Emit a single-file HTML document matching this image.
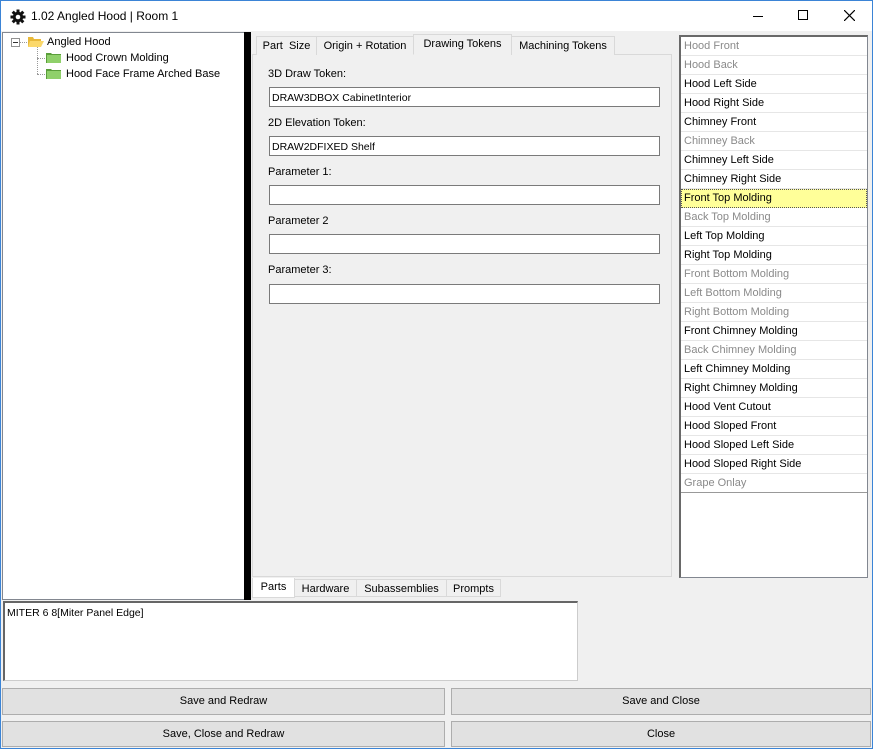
<!DOCTYPE html>
<html><head><style>
body{margin:0;width:873px;height:749px;background:#f0f0f0;font-family:"Liberation Sans",sans-serif;font-size:11px;color:#000;position:relative;overflow:hidden}
.a{position:absolute;box-sizing:border-box}
.win{left:0;top:0;width:873px;height:749px;border:1px solid #3b84d6}
.title{left:1px;top:1px;width:871px;height:30px;background:#fff}
.tree{left:2px;top:32px;width:244px;height:568px;background:#fff;border:1px solid #828790;border-right:none}
.split{left:244px;top:32px;width:7px;height:568px;background:#000}
.tabs{left:252px;top:54px;width:420px;height:523px;border:1px solid #d9d9d9;background:#f0f0f0}
.tab{top:36px;height:19px;border:1px solid #d9d9d9;border-bottom:none;background:#f0f0f0;padding-top:3px;text-align:center;white-space:nowrap}
.inp{left:269px;width:391px;height:20px;background:#fff;border:1px solid #7a7a7a;padding:4px 2px 0;font-size:10.5px}
.lbl{left:268px}
.list{left:679px;top:35px;width:189px;height:543px;background:#fff;border:1px solid #828790;border-top:2px solid #696969;border-left:2px solid #696969}
.row{left:0;width:186px;height:19px;border-bottom:1px solid #e6e6e6;padding:3px 0 0 3px}
.g{color:#8a8a8a}
.btn{height:27px;background:#e1e1e1;border:1px solid #adadad;text-align:center;line-height:25px}
</style></head><body>
<div class="a win"></div>
<div class="a title">
<svg class="a" style="left:9px;top:8px" width="16" height="16" viewBox="0 0 16 16"><g fill="#111"><circle cx="8" cy="8" r="5.2"/><rect x="6.5" y="0.5" width="3" height="15"/><rect x="0.5" y="6.5" width="15" height="3"/><rect x="6.5" y="0.5" width="3" height="15" transform="rotate(45 8 8)"/><rect x="6.5" y="0.5" width="3" height="15" transform="rotate(-45 8 8)"/></g><circle cx="8" cy="8" r="2.3" fill="#fff"/></svg>
<div class="a" style="left:30px;top:8px;font-size:12px">1.02 Angled Hood | Room 1</div>
<div class="a" style="left:752px;top:15px;width:10px;height:1px;background:#000"></div>
<div class="a" style="left:797px;top:9px;width:10px;height:10px;border:1px solid #000"></div>
<svg class="a" style="left:843px;top:9px" width="11" height="11"><path d="M0 0L11 11M11 0L0 11" stroke="#000" stroke-width="1.2"/></svg>
</div>
<div class="a tree">
<div class="a" style="left:8px;top:5px;width:9px;height:9px;border:1px solid #919191;background:#fff"></div>
<div class="a" style="left:10px;top:9px;width:5px;height:1px;background:#333"></div>
<div class="a" style="left:17px;top:9px;width:9px;border-top:1px dotted #999"></div>
<div class="a" style="left:34px;top:14px;height:27px;border-left:1px dotted #999"></div>
<div class="a" style="left:34px;top:25px;width:8px;border-top:1px dotted #999"></div>
<div class="a" style="left:34px;top:41px;width:8px;border-top:1px dotted #999"></div>
<svg class="a" style="left:25px;top:3px" width="16" height="12"><path d="M0 1h5l1 2h7v8H0z" fill="#e8b93a"/><path d="M2 5h14l-3 6H0z" fill="#fbd86b"/></svg>
<svg class="a" style="left:43px;top:19px" width="16" height="12"><path d="M0 1h5l1 1h9v9H0z" fill="#5a9e3a"/><rect x="1" y="3" width="14" height="8" fill="#8fd06a"/></svg>
<svg class="a" style="left:43px;top:35px" width="16" height="12"><path d="M0 1h5l1 1h9v9H0z" fill="#5a9e3a"/><rect x="1" y="3" width="14" height="8" fill="#8fd06a"/></svg>
<div class="a" style="left:44px;top:3px">Angled Hood</div>
<div class="a" style="left:63px;top:19px">Hood Crown Molding</div>
<div class="a" style="left:63px;top:35px">Hood Face Frame Arched Base</div>
</div>
<div class="a split"></div>
<div class="a tabs"></div>
<div class="a tab" style="left:256px;width:61px">Part&nbsp; Size</div>
<div class="a tab" style="left:316px;width:98px">Origin + Rotation</div>
<div class="a tab" style="left:413px;top:34px;height:21px;width:99px;background:#f0f0f0;border-bottom:1px solid #f0f0f0">Drawing Tokens</div>
<div class="a tab" style="left:511px;width:104px">Machining Tokens</div>
<div class="a lbl" style="top:68px">3D Draw Token:</div>
<div class="a inp" style="top:87px">DRAW3DBOX CabinetInterior</div>
<div class="a lbl" style="top:117px">2D Elevation Token:</div>
<div class="a inp" style="top:136px">DRAW2DFIXED Shelf</div>
<div class="a lbl" style="top:166px">Parameter 1:</div>
<div class="a inp" style="top:185px"></div>
<div class="a lbl" style="top:215px">Parameter 2</div>
<div class="a inp" style="top:234px"></div>
<div class="a lbl" style="top:264px">Parameter 3:</div>
<div class="a inp" style="top:284px"></div>
<div class="a list">
<div class="a row g" style="top:0">Hood Front</div>
<div class="a row g" style="top:19px">Hood Back</div>
<div class="a row" style="top:38px">Hood Left Side</div>
<div class="a row" style="top:57px">Hood Right Side</div>
<div class="a row" style="top:76px">Chimney Front</div>
<div class="a row g" style="top:95px">Chimney Back</div>
<div class="a row" style="top:114px">Chimney Left Side</div>
<div class="a row" style="top:133px">Chimney Right Side</div>
<div class="a row" style="top:152px;background:#ffff99;border:1px dotted #555;padding-left:2px;padding-top:2px">Front Top Molding</div>
<div class="a row g" style="top:171px">Back Top Molding</div>
<div class="a row" style="top:190px">Left Top Molding</div>
<div class="a row" style="top:209px">Right Top Molding</div>
<div class="a row g" style="top:228px">Front Bottom Molding</div>
<div class="a row g" style="top:247px">Left Bottom Molding</div>
<div class="a row g" style="top:266px">Right Bottom Molding</div>
<div class="a row" style="top:285px">Front Chimney Molding</div>
<div class="a row g" style="top:304px">Back Chimney Molding</div>
<div class="a row" style="top:323px">Left Chimney Molding</div>
<div class="a row" style="top:342px">Right Chimney Molding</div>
<div class="a row" style="top:361px">Hood Vent Cutout</div>
<div class="a row" style="top:380px">Hood Sloped Front</div>
<div class="a row" style="top:399px">Hood Sloped Left Side</div>
<div class="a row" style="top:418px">Hood Sloped Right Side</div>
<div class="a row g" style="top:437px;border-bottom:1px solid #999">Grape Onlay</div>
</div>
<div class="a tab" style="left:252px;top:578px;height:20px;width:43px;background:#fff;border-bottom:1px solid #d9d9d9;border-top:none;padding-top:3px">Parts</div>
<div class="a tab" style="left:294px;top:579px;height:18px;width:63px;border-bottom:1px solid #d9d9d9;padding-top:3px">Hardware</div>
<div class="a tab" style="left:356px;top:579px;height:18px;width:91px;border-bottom:1px solid #d9d9d9;padding-top:3px">Subassemblies</div>
<div class="a tab" style="left:446px;top:579px;height:18px;width:55px;border-bottom:1px solid #d9d9d9;padding-top:3px">Prompts</div>
<div class="a" style="left:3px;top:601px;width:575px;height:80px;background:#fff;border:1px solid #ccc;border-top:2px solid #666;border-left:2px solid #666;padding:4px 2px;font-size:10.5px">MITER 6 8[Miter Panel Edge]</div>
<div class="a btn" style="left:2px;top:688px;width:443px">Save and Redraw</div>
<div class="a btn" style="left:451px;top:688px;width:420px">Save and Close</div>
<div class="a btn" style="left:2px;top:721px;width:443px;height:26px">Save, Close and Redraw</div>
<div class="a btn" style="left:451px;top:721px;width:420px;height:26px">Close</div>
</body></html>
